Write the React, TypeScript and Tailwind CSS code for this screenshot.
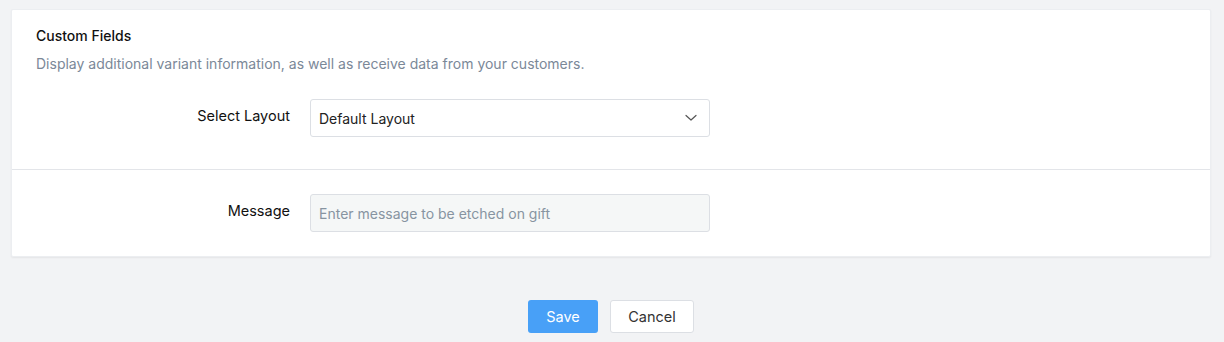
import React from "react";

export default function App() {
  return (
    <div
      className="min-h-[342px] w-full bg-[#f2f3f5] pt-[9px] pl-[11px] pr-[13px]"
      style={{ fontFamily: "Inter, 'Noto Sans', sans-serif" }}
    >
      <div className="bg-white rounded-[2px] shadow-[0_1px_2px_rgba(0,0,0,0.06)] border border-[#eceef1]">
        <div className="px-[24px] pt-[16px] pb-[32px]">
          <div className="text-[14px] leading-[20px] font-medium text-[#111]">Custom Fields</div>
          <div className="mt-[8px] text-[14px] leading-[20px] text-[#7b8898]">
            Display additional variant information, as well as receive data from your customers.
          </div>
          <div className="mt-[25px] flex items-center">
            <div className="w-[274px] pr-[20px] text-right text-[14.5px] leading-[20px] text-[#111] -mt-[4px]">
              Select Layout
            </div>
            <div className="w-[400px] h-[38px] border border-[#dcdfe4] rounded-[3px] bg-white flex items-center justify-between pl-[8px] pr-[12px]">
              <span className="text-[14px] text-[#222]">Default Layout</span>
              <svg width="12" height="8" viewBox="0 0 12 8" fill="none">
                <path d="M1 1.5 L6 6 L11 1.5" stroke="#555" strokeWidth="1.2" strokeLinecap="round" strokeLinejoin="round" />
              </svg>
            </div>
          </div>
        </div>
        <div className="border-t border-[#e3e5e9] px-[24px] pt-[24px] pb-[24px]">
          <div className="flex items-center">
            <div className="w-[274px] pr-[20px] text-right text-[14.5px] leading-[20px] text-[#111] -mt-[4px]">
              Message
            </div>
            <input
              className="w-[400px] h-[38px] border border-[#dcdfe4] rounded-[3px] bg-[#f5f7f7] pl-[8px] text-[14px] outline-none placeholder:text-[#8794a1]"
              placeholder="Enter message to be etched on gift"
            />
          </div>
        </div>
      </div>
      <div className="mt-[43px] flex justify-center gap-[12px]">
        <button className="w-[70px] h-[33px] rounded-[3px] bg-[#48a0f7] text-white text-[14.5px]">
          Save
        </button>
        <button className="w-[84px] h-[33px] rounded-[3px] bg-white border border-[#dcdfe4] text-[#333] text-[14.5px]">
          Cancel
        </button>
      </div>
    </div>
  );
}
